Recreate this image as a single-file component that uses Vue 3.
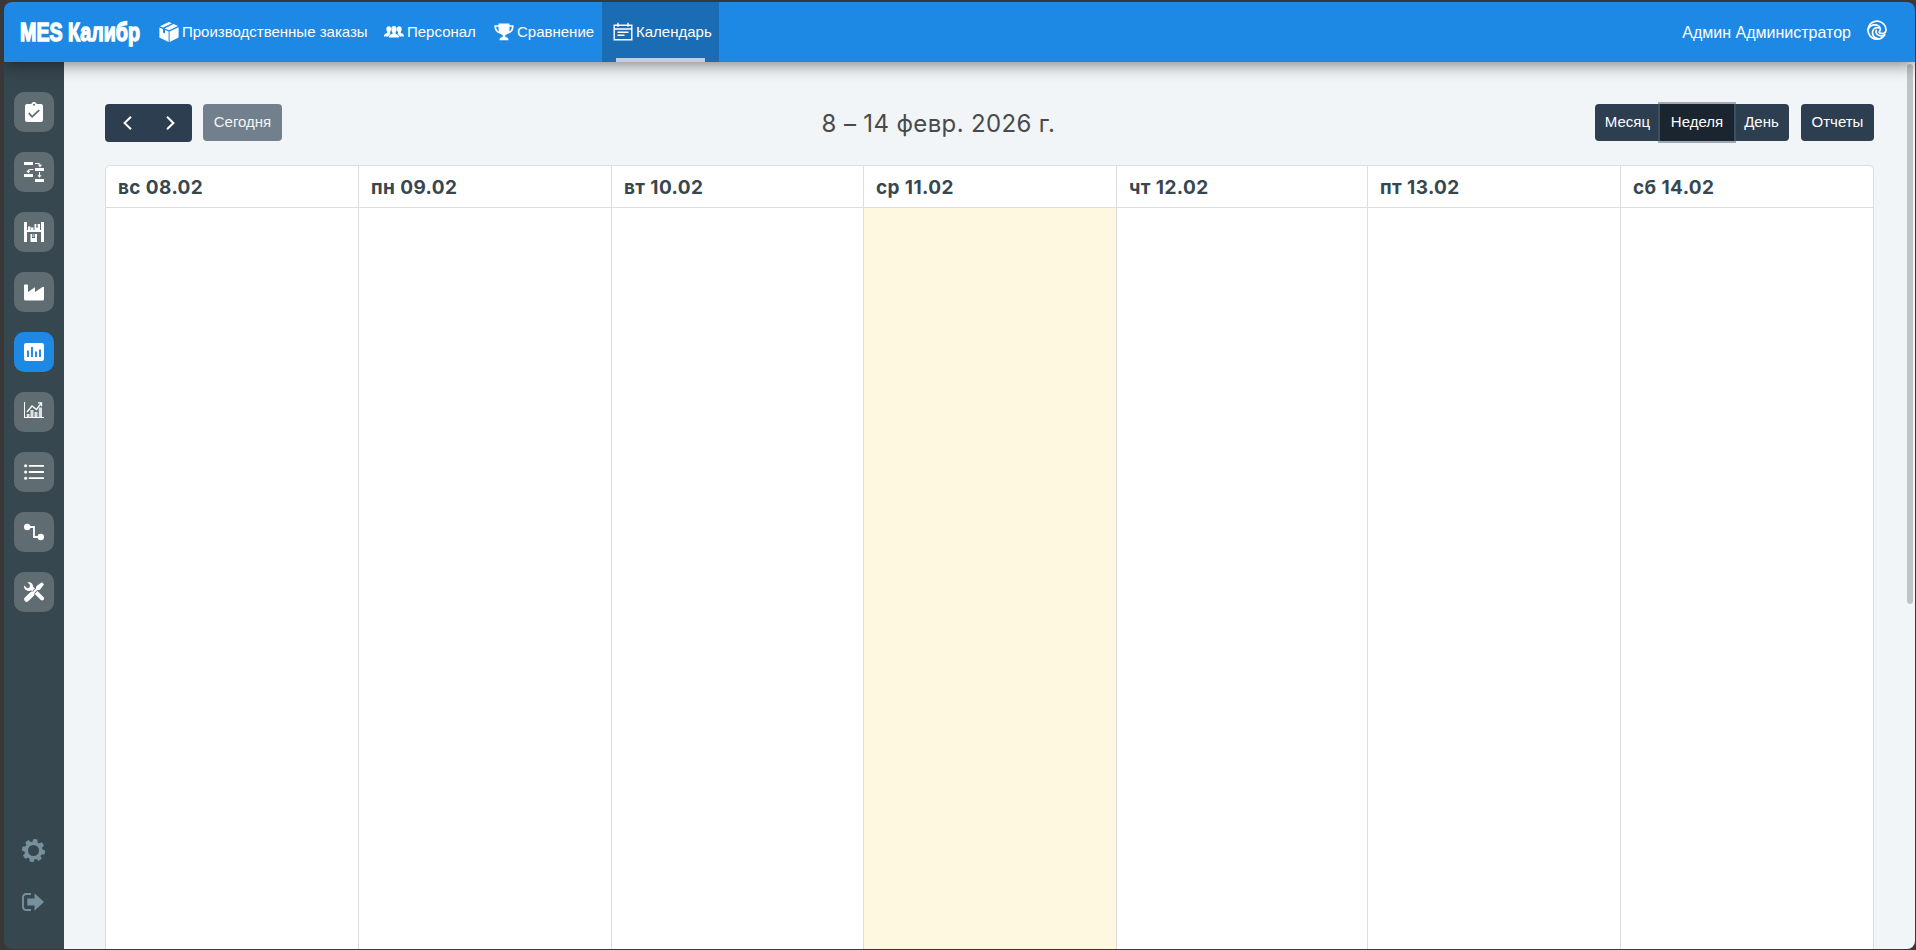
<template>
  <div class="window">
    <header class="navbar">
      <svg class="logo" viewBox="0 0 126 32">
        <text x="1" y="25" textLength="120" lengthAdjust="spacingAndGlyphs">MES Калибр</text>
      </svg>
      <nav class="menu">
        <a
          v-for="item in menu"
          :key="item.id"
          :class="['menu-item', item.id, { active: item.id === activeMenu }]"
          @click="activeMenu = item.id"
        >
          <svg class="menu-icon" viewBox="0 0 20 20">
            <g v-if="item.id === 'orders'" fill="#fff">
              <path d="M9.800 0 13 1.300 4 5.600.9 4.300z" />
              <path d="M14.500 2 19 4 10 8.200 5.500 6.400z" />
              <path d="M.4 5.500 4 7v3.600l2 .9V8l3.600 1.500V20L.4 15.600z" />
              <path d="M19.600 5.300v10.200L10.600 20V9.500z" />
            </g>
            <g v-else-if="item.id === 'staff'" fill="#fff">
              <path d="M4.800 4.300c1.500 0 2.300 1 2.300 2.600 0 1.500-.7 2.800-1.300 3.600l.6 1.300-2.200 2.600H0c0-1.900.7-2.500 3.200-3.300v-1.200C2.600 9.100 2.300 8 2.300 6.900c0-1.600 1-2.600 2.500-2.600z" />
              <path d="M15.200 4.300c1.500 0 2.500 1 2.500 2.600 0 1.100-.3 2.200-.9 3v1.200c2.500.8 3.200 1.400 3.200 3.300h-4.200l-2.200-2.600.6-1.300c-.6-.8-1.300-2.100-1.300-3.600 0-1.600.8-2.600 2.300-2.600z" />
              <path d="M10 4c1.700 0 2.700 1.200 2.700 3.100 0 1.500-.5 2.600-1.200 3.300v1.300c2.800.9 3.700 1.700 3.700 3.800H4.800c0-2.100.9-2.900 3.700-3.800v-1.300C7.800 9.700 7.300 8.600 7.300 7.100 7.300 5.200 8.300 4 10 4z" />
            </g>
            <g v-else-if="item.id === 'compare'">
              <path d="M5 4H1.200c0 4 2 6.300 5.300 6.800M15 4h3.800c0 4-2 6.300-5.300 6.800" fill="none" stroke="#fff" stroke-width="1.700" />
              <path d="M4.500 1.500h11v5.200c0 3.500-1.600 5.500-4.200 6.200v2.200c2 .2 3 .9 3.300 3.100H5.400c.3-2.200 1.300-2.900 3.300-3.100v-2.200c-2.600-.7-4.200-2.700-4.200-6.200z" fill="#fff" />
            </g>
            <g v-else fill="none" stroke="#fff" stroke-width="1.400">
              <path d="M1.200 3.300h17.600v14.500H1.200zM1.200 7h17.600M5 .8v4M15 .8v4M4.500 10.200h11M4.500 13.300h7" />
            </g>
          </svg>
          <span>{{ item.title }}</span>
        </a>
      </nav>
      <div class="user">
        <span class="user-name">Админ Администратор</span>
        <svg class="user-icon" viewBox="0 0 20 20" fill="none" stroke="#fff" stroke-linecap="round" stroke-width="1.700">
          <path d="M17.600 15A9 9 0 1 1 19 9.700c0 2.600-1.900 3.800-4 3.800-1.300 0-2.300-.4-2.600-1.100" />
          <path d="M1.300 9.200C2.500 6.300 5 4.900 7.800 4.900c3.300 0 5.500 2 5.500 4.300 0 1.300-1 1.700-.9 3.200" />
          <path d="M11.500 7.800C8.300 7 5.500 9.200 5.500 12.300c0 3 2 5.700 5.300 6.300M9.300 10.300c-1.100 3.500 2.700 7.200 8.300 4.700" />
        </svg>
      </div>
    </header>

    <div class="body">
      <aside class="sidebar">
        <button
          v-for="name in tools"
          :key="name"
          :class="['tool', { active: name === activeTool }]"
          @click="activeTool = name"
        >
          <svg viewBox="0 0 20 20" fill="#fff">
            <g v-if="name === 'tasks'">
              <path fill-rule="evenodd" d="M3 2h4.300a2.800 2.800 0 0 1 5.400 0H17a2 2 0 0 1 2 2v14a2 2 0 0 1-2 2H3a2 2 0 0 1-2-2V4a2 2 0 0 1 2-2zm7-.2a1 1 0 1 0 0 2 1 1 0 0 0 0-2z" />
              <path d="m4.800 11.200 3.300 3.600 7.100-6.700" fill="none" stroke="#5f6d73" stroke-width="1.800" />
            </g>
            <g v-else-if="name === 'flow'">
              <path d="M0 0h9v3H0zM11 6h9v3h-9zM0 12h9v3H0zM11 17h9v3h-9z" />
              <path d="M11 1.500h3.500q1.500 0 1.500 1.500M9.500 7.500H6Q4.300 7.500 4.300 9M15.500 10v4" fill="none" stroke="#fff" stroke-width="1.100" />
              <path d="M13.900 2.800h4.200L16 5.400zM2.200 8.700h4.200l-2.100 2.500zM13.400 13.200h4.200l-2.100 2.600z" />
            </g>
            <g v-else-if="name === 'store'">
              <path d="M0 0h3v8h14V0h3v20h-3V10H3v10H0z" />
              <path d="M4 4.500h2.500V8H4zM7 5.500h2.500V8H7zM10.500 2H12v3.500h2V2h2v6h-5.500zM6.500 12H8v4h3v-4h2v8H6.500z" />
              <path d="M8.500 12h2v3h-2zM12.300 2h1.400v2.600h-1.400z" fill="#aeb5b8" />
            </g>
            <path v-else-if="name === 'factory'" d="M0 3.500Q0 2.500 1 2.500h2q1 0 1 1V10l7-4.800V10l7.500-5Q20 4.200 20 5.700V17q0 1.500-1.500 1.500h-17Q0 18.500 0 17z" />
            <g v-else-if="name === 'stats'">
              <rect y="1" width="20" height="18" rx="2.200" />
              <path d="M4 8.500v6.500M8 5v10M12 9.500V15M16 7.500V15" fill="none" stroke="#1e88e5" stroke-width="1.900" />
            </g>
            <g v-else-if="name === 'chart'">
              <path d="M.5 0v15.500H20" fill="none" stroke="#fff" stroke-width="1.100" />
              <path d="M2.800 12h2.800v3.500H2.800zM6.500 8h3v7.500h-3zM10.500 10h3v5.500h-3zM14.800 5.500H18v10h-3.200z" opacity=".8" />
              <path d="m3 10 5-6 4.500 3.500L17 1.300M14 .9h3.500v3.300" fill="none" stroke="#fff" stroke-width="1.300" />
            </g>
            <g v-else-if="name === 'list'">
              <circle cx="1.600" cy="3.800" r="1.500" />
              <circle cx="1.600" cy="10" r="1.500" />
              <circle cx="1.600" cy="16.200" r="1.500" />
              <path d="M5.500 3.800H19.300M5.500 10H19.300M5.500 16.200H19.300" stroke="#fff" stroke-width="1.800" stroke-linecap="round" />
            </g>
            <g v-else-if="name === 'route'">
              <circle cx="3.200" cy="5" r="3.200" />
              <circle cx="16.800" cy="15" r="3.200" />
              <path d="M4 5h6v10h7" fill="none" stroke="#fff" stroke-width="1.800" />
            </g>
            <g v-else>
              <path d="M8 6.300 18 16.300" stroke="#fff" stroke-width="4" stroke-linecap="round" />
              <path d="M.3 3.600 3 6.200l2.500-.6.600-2.500L3.500.5C7-.7 10 2.500 8.800 6.200L6.200 8.800C2.700 9.900-.8 7 .3 3.600z" />
              <path d="m13.500 6.500-4 4" stroke="#5f6d73" stroke-width="3.500" />
              <path d="m12.300 4.300 5.500-4L20 2.300l-4 5.500-2.800.4-1.300-1.300z" />
              <path d="m14 6-5 5" stroke="#fff" stroke-width="1.800" />
              <path d="M8.300 11.700 3 17" stroke="#5f6d73" stroke-width="6.500" />
              <path d="M7.800 12.200 2.700 17.300" stroke="#fff" stroke-width="5" stroke-linecap="round" />
            </g>
          </svg>
        </button>
        <div class="bottom-tools">
          <svg class="gear" viewBox="-11 -11 22 22">
            <circle r="7" fill="none" stroke="#78909c" stroke-width="3.400" />
            <path v-for="n in 8" :key="n" :transform="`rotate(${n * 45 + 10})`" d="M-2.500-7.500-1.900-11h3.800l.6 3.500z" fill="#78909c" />
          </svg>
          <svg class="exit" viewBox="0 0 22 18">
            <path d="M9 1H4.500Q1 1 1 4.500v9Q1 17 4.500 17H9" fill="none" stroke="#78909c" stroke-width="1.900" />
            <path d="M5.300 5.500h7.200V.3L22 9l-9.500 8.700V12.500H5.300z" fill="#78909c" />
          </svg>
        </div>
      </aside>

      <main class="content">
        <div class="toolbar">
          <div class="toolbar-left">
            <div class="btn-group arrows">
              <button class="btn arrow">
                <svg viewBox="0 0 16 16"><path d="M11 1.700 4.600 8l6.400 6.300" /></svg>
              </button>
              <button class="btn arrow">
                <svg viewBox="0 0 16 16"><path d="M5 1.700 11.400 8 5 14.300" /></svg>
              </button>
            </div>
            <button class="btn today" disabled>Сегодня</button>
          </div>
          <h2 class="title">8 – 14 февр. 2026 г.</h2>
          <div class="toolbar-right">
            <div class="btn-group">
              <button
                v-for="view in views"
                :key="view.id"
                :class="['btn', view.id, { active: view.id === activeView }]"
                @click="activeView = view.id"
              >{{ view.title }}</button>
            </div>
            <button class="btn reports">Отчеты</button>
          </div>
        </div>

        <div class="week-grid">
          <div v-for="day in days" :key="day.label" class="day">
            <div class="day-head">{{ day.label }}</div>
            <div :class="['day-body', { now: day.now }]"></div>
          </div>
        </div>
        <div class="scrollbar"></div>
      </main>
    </div>
  </div>
</template>

<script setup>
import { ref } from 'vue';

const menu = [
  { id: 'orders', title: 'Производственные заказы' },
  { id: 'staff', title: 'Персонал' },
  { id: 'compare', title: 'Сравнение' },
  { id: 'calendar', title: 'Календарь' }
];
const activeMenu = ref('calendar');

const tools = ['tasks', 'flow', 'store', 'factory', 'stats', 'chart', 'list', 'route', 'repair'];
const activeTool = ref('stats');

const views = [
  { id: 'month', title: 'Месяц' },
  { id: 'week', title: 'Неделя' },
  { id: 'daily', title: 'День' }
];
const activeView = ref('week');

const days = [
  { label: 'вс 08.02' },
  { label: 'пн 09.02' },
  { label: 'вт 10.02' },
  { label: 'ср 11.02', now: true },
  { label: 'чт 12.02' },
  { label: 'пт 13.02' },
  { label: 'сб 14.02' }
];
</script>

<style>
body { background: #383838; padding: 2px 1px 1px 4px; box-sizing: border-box; height: 950px; overflow: hidden; }
</style>

<style scoped>
.window { height: 947px; display: flex; flex-direction: column; border-radius: 8px; overflow: hidden; font-family: "Liberation Sans", Arial, sans-serif; font-size: 15px; }
button { font-family: inherit; border: 0; padding: 0; cursor: pointer; }

/* header */
.navbar { flex: 0 0 60px; display: flex; background: #1e88e5; color: #fff; box-shadow: 0 2px 16px rgba(0,0,0,0.5); z-index: 2; }
.logo { width: 126px; height: 32px; margin: 14px 0 0 15px; overflow: visible; }
.logo text { font-family: "Liberation Sans", Arial, sans-serif; font-weight: bold; font-size: 25px; fill: #fff; stroke: #fff; stroke-width: 1.4px; }
.menu { display: flex; margin-left: 3px; }
.menu-item { display: flex; align-items: center; position: relative; box-sizing: border-box; padding: 0 0 0 11px; cursor: pointer; white-space: nowrap; }
.menu-item span { padding-bottom: 1px; }
.menu-icon { width: 20px; height: 20px; margin-right: 3px; flex: none; }
.orders { width: 225px; }
.staff { width: 110px; }
.compare { width: 119px; }
.calendar { width: 117px; }
.menu-item.active { background: #1a6cb5; }
.menu-item.active::after { content: ""; position: absolute; left: 14px; right: 14px; bottom: 0; height: 4px; background: #bbd0e8; }
.user { margin-left: auto; display: flex; align-items: center; padding-right: 28px; font-size: 16px; }
.user-name { padding-top: 1px; }
.user-icon { width: 20px; height: 20px; margin: 0 0 4px 16px; }

/* left panel */
.body { flex: 1; min-height: 0; display: flex; }
.sidebar { flex: 0 0 60px; display: flex; flex-direction: column; align-items: center; gap: 20px; padding-top: 30px; box-sizing: border-box; background: #37474f; }
.tool { width: 40px; height: 40px; flex: none; border-radius: 10px; background: #5f6d73; display: flex; align-items: center; justify-content: center; }
.tool.active { background: #1e88e5; }
.tool svg { width: 20px; height: 20px; }
.bottom-tools { margin-top: auto; display: flex; flex-direction: column; align-items: center; margin-bottom: 38px; padding-right: 2px; }
.gear { width: 23px; height: 23px; margin-bottom: 31px; }
.exit { width: 22px; height: 18px; }

/* calendar */
.content { flex: 1; min-width: 0; position: relative; display: flex; flex-direction: column; padding: 42px 41px 0; background: #f1f5f8; }
.toolbar { display: flex; justify-content: space-between; align-items: flex-start; height: 61px; flex: none; }
.toolbar-left, .toolbar-right { display: flex; }
.toolbar-right { gap: 12px; }
.btn-group { display: flex; }
.btn { height: 37px; padding: 0 0 3px; font-size: 15px; color: #fff; background: #2c3e50; border-radius: 4px; }
.arrows { margin-right: 11px; }
.arrow { width: 44px; height: 38px; padding: 0 0 0 2px; display: flex; align-items: center; justify-content: center; }
.arrow + .arrow { width: 43px; padding: 0 2px 0 0; }
.arrow svg { width: 16px; height: 16px; fill: none; stroke: #fff; stroke-width: 2; }
.btn-group .btn:first-child { border-radius: 4px 0 0 4px; }
.btn-group .btn:last-child { border-radius: 0 4px 4px 0; }
.today { width: 79px; background: #727f8c; color: #f4f6f7; }
.month { width: 65px; }
.week { width: 74px; }
.daily { width: 55px; }
.reports { width: 73px; }
.btn-group .week { border-radius: 0; }
.btn.active { background: #1a252f; box-shadow: 0 0 0 2px rgba(77,94,107,0.5); z-index: 1; }
.title { margin: 3px 0 0; font-family: Inter, sans-serif; font-size: 24px; font-weight: 400; line-height: 34px; letter-spacing: 0.35px; color: #4a4a4a; }
.week-grid { flex: 1; display: grid; grid-template-columns: 253px 253px 252px 253px 251px 253px 1fr; border: 1px solid #ddd; border-bottom: 0; border-radius: 5px 5px 0 0; background: #fff; }
.day { display: flex; flex-direction: column; border-right: 1px solid #ddd; }
.day:last-child { border-right: 0; }
.day-head { height: 41px; line-height: 43px; padding-left: 12px; border-bottom: 1px solid #ddd; font-family: Inter, sans-serif; font-weight: 700; font-size: 19px; letter-spacing: 0.4px; color: #37474f; }
.day-body { flex: 1; }
.day-body.now { background: #fff8e1; }
.scrollbar { position: absolute; top: 2px; right: 2px; width: 6px; height: 540px; border-radius: 3px; background: #c1c4c7; }
</style>
